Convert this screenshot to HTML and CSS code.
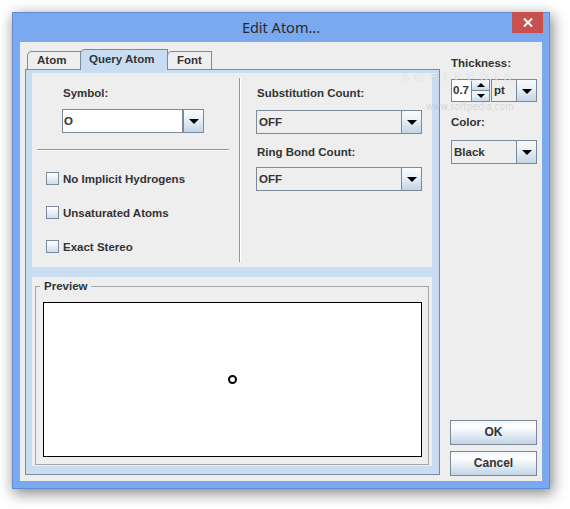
FILE: index.html
```html
<!DOCTYPE html>
<html>
<head>
<meta charset="utf-8">
<title>Edit Atom...</title>
<link rel="stylesheet" href="styles.css">
</head>
<body>
<div class="window">
  <div class="titlebar">
    <div class="title">Edit Atom...</div>
    <div class="close">
      <svg width="10" height="9" viewBox="0 0 10 9"><path d="M1 0.5 L9 8.5 M9 0.5 L1 8.5" stroke="#fff" stroke-width="2" fill="none"/></svg>
    </div>
  </div>
  <div class="client">
    <div class="tabpane">
      <div class="tabs">
        <div class="tab tab-atom">Atom</div>
        <div class="tab tab-query selected">Query Atom</div>
        <div class="tab tab-font">Font</div>
      </div>
      <div class="tabbody">
        <div class="panel query">
          <div class="qleft">
            <div class="label">Symbol:</div>
            <div class="combo editable symbol"><span class="value">O</span><span class="arrowbtn"></span></div>
            <div class="hsep"></div>
            <div class="checks">
              <div class="check"><span class="box"></span><span class="ctext">No Implicit Hydrogens</span></div>
              <div class="check"><span class="box"></span><span class="ctext">Unsaturated Atoms</span></div>
              <div class="check"><span class="box"></span><span class="ctext">Exact Stereo</span></div>
            </div>
          </div>
          <div class="vsep"></div>
          <div class="qright">
            <div class="label">Substitution Count:</div>
            <div class="combo wide first"><span class="value">OFF</span><span class="arrowbtn"></span></div>
            <div class="label ring">Ring Bond Count:</div>
            <div class="combo wide second"><span class="value">OFF</span><span class="arrowbtn"></span></div>
          </div>
        </div>
        <div class="panel preview">
          <fieldset class="frame">
            <legend>Preview</legend>
            <div class="canvas"><span class="atom"></span></div>
          </fieldset>
        </div>
      </div>
    </div>
    <div class="side">
      <div class="label thick">Thickness:</div>
      <div class="spinrow">
        <div class="spinfield"><span class="stext">0.7</span></div>
        <div class="spinbtns">
          <span class="sbtn up"></span>
          <span class="sbtn down"></span>
        </div>
        <div class="combo unit"><span class="value"><span class="stext">pt</span></span><span class="arrowbtn"></span></div>
      </div>
      <div class="label colorlbl">Color:</div>
      <div class="combo color"><span class="value">Black</span><span class="arrowbtn"></span></div>
      <div class="buttons">
        <div class="btn">OK</div>
        <div class="btn cancel">Cancel</div>
      </div>
    </div>
  </div>
</div>
<div class="watermark">SOFTPEDIA</div>
<div class="watermark-url">www.softpedia.com</div>
</body>
</html>
```

FILE: styles.css
```css
html, body {
  margin: 0;
  padding: 0;
}
body {
  width: 570px;
  height: 509px;
  overflow: hidden;
  background: #ffffff;
  position: relative;
  padding: 12px 0 0 12px;
  box-sizing: border-box;
  font-family: "Liberation Sans", Arial, sans-serif;
  font-size: 11.5px;
  font-weight: bold;
  color: #333333;
}
.window {
  width: 538px;
  height: 477px;
  box-sizing: border-box;
  background: #7aa9ef;
  border: 1px solid #5d8cd4;
  box-shadow: 2px 4px 13px 1px rgba(0, 0, 0, 0.45);
  display: flex;
  flex-direction: column;
}
.titlebar {
  height: 29px;
  display: flex;
  align-items: flex-start;
  flex: none;
}
.title {
  flex: 1;
  text-align: center;
  padding-left: 37px;
  line-height: 29px;
  font-family: "Noto Sans", "Open Sans", sans-serif;
  font-weight: normal;
  font-size: 14.5px;
  color: #2a2a2a;
}
.close {
  width: 31px;
  height: 21px;
  margin-top: -1px;
  margin-right: 6px;
  background: #c75050;
  display: flex;
  align-items: center;
  justify-content: center;
}
.client {
  flex: 1;
  margin: 0 7px 7px 7px;
  background: #eeeeee;
  display: flex;
  padding: 7px 0 5px 5px;
}
.tabpane {
  width: 415px;
  display: flex;
  flex-direction: column;
  flex: none;
}
.tabs {
  height: 20px;
  display: flex;
  align-items: flex-end;
  padding-left: 2px;
  flex: none;
}
.tab {
  box-sizing: border-box;
  height: 18px;
  border: 1px solid #7a8a99;
  border-bottom: none;
  border-top-left-radius: 5px;
  background: #eeeeee;
  line-height: 17px;
  position: relative;
}
.tab-atom { width: 54px; padding-left: 9px; }
.tab-query { width: 88px; margin-left: -1px; padding-left: 8px; }
.tab-font { width: 45px; margin-left: -1px; padding-left: 9px; }
.tab.selected {
  height: 21px;
  margin-bottom: -1px;
  background: #c8ddf2;
  z-index: 1;
  line-height: 19px;
}
.tabbody {
  box-sizing: border-box;
  height: 406px;
  border: 1px solid #7a8a99;
  background: #c8ddf2;
  padding: 3px 7px 8px 6px;
  display: flex;
  flex-direction: column;
  gap: 10px;
}
.panel {
  background: #eeeeee;
  flex: none;
}
.query {
  height: 194px;
  display: flex;
}
.qleft {
  width: 207px;
  padding-top: 13px;
  box-sizing: border-box;
}
.label {
  height: 14px;
  line-height: 14px;
  white-space: nowrap;
}
.qleft .label { margin-left: 31px; }
.vsep {
  width: 1px;
  background: #8298bb;
  border-right: 1px solid #ffffff;
  margin: 5px 0;
}
.qright {
  flex: 1;
  padding: 13px 0 0 15px;
}
.qright .label { margin-left: 1px; }
.combo {
  box-sizing: border-box;
  height: 24px;
  border: 1px solid #7a8a99;
  display: flex;
  background: #eeeeee;
}
.combo .value {
  flex: 1;
  line-height: 22px;
  padding-left: 2px;
  white-space: nowrap;
  overflow: hidden;
}
.combo.editable .value {
  background: #ffffff;
  border-right: 1px solid #7a8a99;
  padding-left: 1px;
}
.arrowbtn {
  width: 19px;
  flex: none;
  border-left: 1px solid #7a8a99;
  background: linear-gradient(#f7fafd, #eef3f8 35%, #d6e2ee 70%, #c4d4e4);
  display: flex;
  align-items: center;
  justify-content: center;
}
.arrowbtn::after {
  content: "";
  width: 0;
  height: 0;
  border-left: 5px solid transparent;
  border-right: 5px solid transparent;
  border-top: 5px solid #000000;
  margin-top: 1px;
}
.symbol {
  width: 142px;
  margin: 9px 0 0 30px;
}
.hsep {
  height: 1px;
  background: #8298bb;
  border-bottom: 1px solid #ffffff;
  margin: 16px 10px 0 5px;
}
.checks {
  margin: 21px 0 0 14px;
  display: flex;
  flex-direction: column;
  gap: 21px;
}
.check {
  height: 13px;
  display: flex;
  align-items: center;
  gap: 4px;
}
.box {
  box-sizing: border-box;
  width: 13px;
  height: 13px;
  border: 1px solid #7a8a99;
  background: linear-gradient(#ffffff, #eef3f8 40%, #cfdcea);
}
.ctext { line-height: 14px; }
.wide { width: 166px; }
.first { margin-top: 10px; }
.ring { margin-top: 11px; }
.second { margin-top: 8px; }
.preview {
  height: 189px;
  padding: 2px 3px 1px 3px;
  box-sizing: border-box;
}
.frame {
  margin: 0;
  min-width: 0;
  box-sizing: border-box;
  height: 186px;
  border: 1px solid #a6a6a6;
  padding: 9px 6px 7px 7px;
}
.frame legend {
  padding: 0 4px;
  margin-left: -3px;
  line-height: 14px;
  color: #2d3440;
}
.canvas {
  box-sizing: border-box;
  height: 155px;
  border: 1px solid #000000;
  background: #ffffff;
  display: flex;
  align-items: center;
  justify-content: center;
}
.atom {
  box-sizing: border-box;
  width: 9px;
  height: 9px;
  border: 2px solid #000000;
  border-radius: 50%;
}
.side {
  flex: 1;
  padding: 0 5px 0 10px;
  display: flex;
  flex-direction: column;
}
.thick { margin: 7px 0 0 1px; }
.spinrow {
  margin: 9px 0 0 1px;
  height: 23px;
  display: flex;
}
.spinfield {
  box-sizing: border-box;
  width: 20px;
  border: 1px solid #7a8a99;
  border-right: none;
  background: #ffffff;
  padding-left: 1px;
  overflow: hidden;
  white-space: nowrap;
  display: flex;
  align-items: center;
}
.stext {
  display: block;
  line-height: 11px;
  height: 11px;
}
.spinbtns {
  width: 19px;
  display: flex;
  flex-direction: column;
  border: 1px solid #7a8a99;
  box-sizing: border-box;
}
.sbtn {
  flex: 1;
  background: linear-gradient(#f7fafd, #e6eef6 50%, #c8d8e8);
  display: flex;
  align-items: center;
  justify-content: center;
}
.sbtn.up { border-bottom: 1px solid #7a8a99; }
.sbtn.up::after {
  content: "";
  border-left: 4px solid transparent;
  border-right: 4px solid transparent;
  border-bottom: 4px solid #000000;
}
.sbtn.down::after {
  content: "";
  border-left: 4px solid transparent;
  border-right: 4px solid transparent;
  border-top: 4px solid #000000;
}
.unit {
  width: 46px;
  height: 23px;
  margin-left: 1px;
}
.unit .value {
  display: flex;
  align-items: center;
}
.colorlbl { margin: 13px 0 0 1px; }
.color {
  width: 86px;
  margin: 11px 0 0 1px;
}
.buttons {
  margin-top: auto;
  display: flex;
  flex-direction: column;
  gap: 6px;
}
.btn {
  box-sizing: border-box;
  width: 87px;
  height: 25px;
  border: 1px solid #7a8a99;
  background: linear-gradient(#eef4fa, #ffffff 25%, #e3ecf5 60%, #c3d4e6);
  text-align: center;
  line-height: 23px;
  font-size: 12px;
}
.watermark {
  position: absolute;
  left: 402px;
  top: 71px;
  height: 13px;
  line-height: 13px;
  font-family: "DejaVu Sans", sans-serif;
  font-size: 11px;
  font-weight: normal;
  letter-spacing: 6px;
  color: rgba(255, 255, 255, 0.75);
  text-shadow: 0 0 1px rgba(120, 120, 120, 0.4);
  pointer-events: none;
}
.watermark-url {
  position: absolute;
  left: 426px;
  top: 102px;
  height: 10px;
  line-height: 10px;
  font-family: "DejaVu Sans Condensed", sans-serif;
  font-size: 10px;
  font-weight: normal;
  color: rgba(170, 170, 170, 0.35);
  pointer-events: none;
}
```
